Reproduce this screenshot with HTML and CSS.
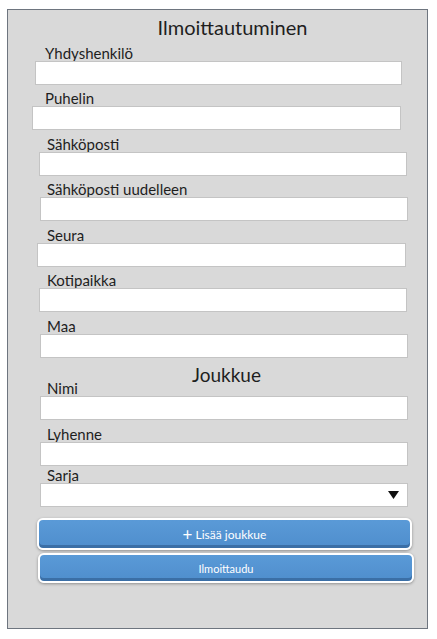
FILE: index.html
```html
<!DOCTYPE html>
<html lang="fi">
<head>
    <meta charset="UTF-8">
    <meta name="viewport" content="width=device-width, initial-scale=1.0">
    <title>Ilmoittautuminen</title>
    <link rel="stylesheet" href="styles.css">
</head>
<body>

    <div class="panel">
        <h2 class="title">Ilmoittautuminen</h2>

        <div class="field nudge-5">
            <label>Yhdyshenkilö</label>
            <input type="text">
        </div>
        <div class="field nudge-8">
            <label>Puhelin</label>
            <input type="text">
        </div>
        <div class="field nudge-1">
            <label>Sähköposti</label>
            <input type="text">
        </div>
        <div class="field">
            <label>Sähköposti uudelleen</label>
            <input type="text">
        </div>
        <div class="field nudge-3">
            <label>Seura</label>
            <input type="text">
        </div>
        <div class="field nudge-1">
            <label>Kotipaikka</label>
            <input type="text">
        </div>
        <div class="field">
            <label>Maa</label>
            <input type="text">
        </div>

        <h3 class="subtitle">Joukkue</h3>

        <div class="field">
            <label>Nimi</label>
            <input type="text">
        </div>
        <div class="field">
            <label>Lyhenne</label>
            <input type="text">
        </div>
        <div class="field short">
            <label>Sarja</label>
            <div class="select">
                <svg width="11" height="8" viewBox="0 0 11 8"><polygon points="0,0 11,0 5.5,8" fill="#111"/></svg>
            </div>
        </div>

        <button class="btn add-btn"><span class="plus">+</span> Lisää joukkue</button>
        <button class="btn send-btn">Ilmoittaudu</button>
    </div>

</body>
</html>
```

FILE: styles.css
```css
body {
    margin: 0;
    background: #ffffff;
    font-family: Lato, "Open Sans", sans-serif;
    color: #1e1e1e;
}
.panel {
    box-sizing: border-box;
    width: 421px;
    height: 620px;
    margin: 9px 0 0 7px;
    background: #d9d9d9;
    border: 1px solid #6e757f;
    display: flex;
    flex-direction: column;
}
.title {
    margin: 5px 0 0 0;
    font-size: 20px;
    font-weight: normal;
    line-height: 24px;
    text-align: center;
    padding-left: 30px;
}
.field {
    display: flex;
    flex-direction: column;
}
.field label {
    padding-top: 5.5px;
    margin-left: 39px;
    font-size: 15px;
    line-height: 16px;
}
.field input,
.select {
    box-sizing: border-box;
    width: 368px;
    height: 24px;
    margin: 0 0 0 32px;
    background: #ffffff;
    border: 1px solid #c4c4c4;
    font-family: inherit;
    font-size: 13px;
}
.nudge-5 label,
.nudge-8 label {
    margin-left: 37px;
}
.nudge-5 input {
    margin-left: 27px;
    width: 367px;
}
.nudge-8 input {
    margin-left: 24px;
    width: 369px;
}
.nudge-1 input {
    margin-left: 31px;
}
.nudge-3 input {
    margin-left: 29px;
    width: 369px;
}
.subtitle {
    margin: 7px 0 -10px 0;
    font-size: 19px;
    font-weight: normal;
    line-height: 20px;
    text-align: center;
    padding-left: 18px;
}
.short label {
    padding-top: 1.5px;
}
.select {
    display: flex;
    align-items: center;
    justify-content: flex-end;
    padding-right: 8px;
}
.btn {
    box-sizing: border-box;
    display: block;
    color: #ffffff;
    font-family: inherit;
    font-size: 11px;
    background: linear-gradient(#5a9ad7, #4f8ecd);
    border: 2px solid #ffffff;
    border-radius: 6px;
    box-shadow: inset 0 -3px 0 #3b6fa6, 0 1px 3px rgba(0, 0, 0, 0.35);
    cursor: pointer;
    padding: 0;
}
.add-btn {
    width: 375px;
    height: 32px;
    margin: 11px 0 0 29px;
    font-size: 12px;
}
.plus {
    font-size: 17px;
    vertical-align: -2px;
}
.send-btn {
    width: 376px;
    height: 30px;
    margin: 3px 0 0 30px;
}
```
